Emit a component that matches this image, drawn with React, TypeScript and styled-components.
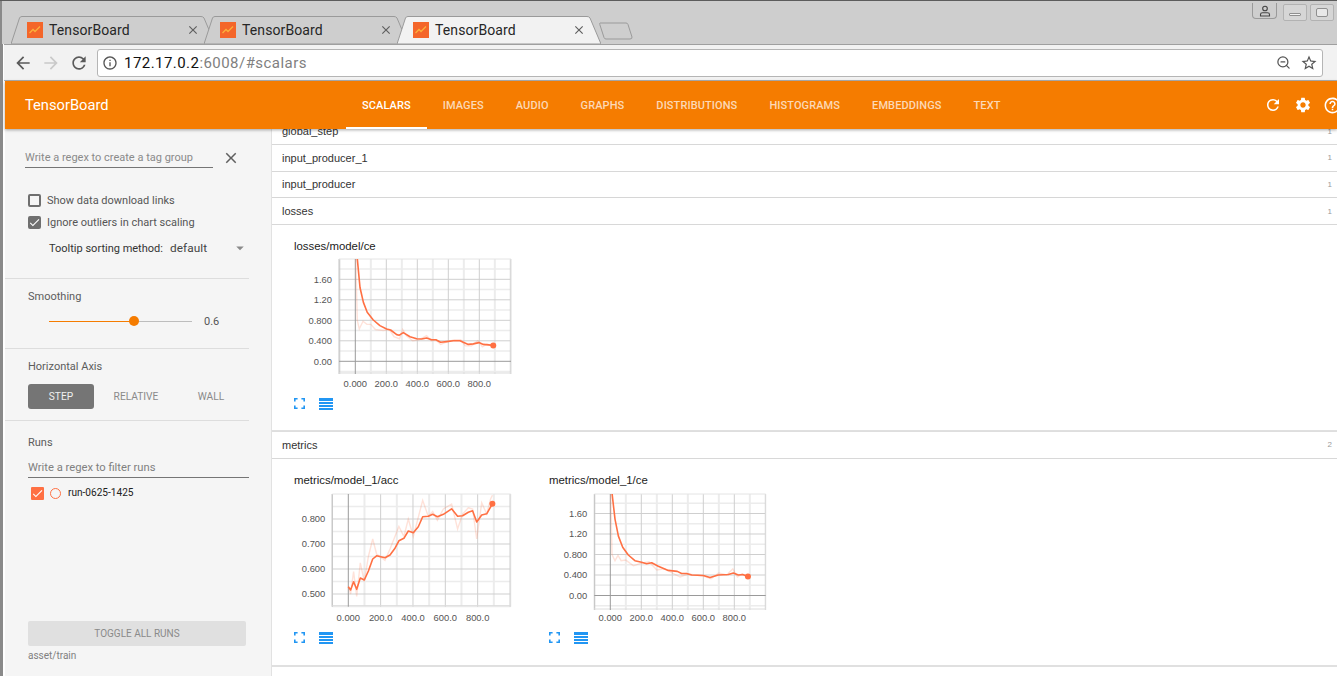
import React from "react";
import styled, { createGlobalStyle } from "styled-components";
import { MdArrowBack, MdArrowForward, MdRefresh, MdInfoOutline, MdStarBorder, MdSettings, MdHelpOutline, MdClose, MdCheck, MdArrowDropDown } from "react-icons/md";
import { ZoomOut } from "lucide-react";

const Global = createGlobalStyle`
  html, body { margin: 0; padding: 0; width: 1337px; height: 676px; overflow: hidden; background: #cecece; }
  #root { width: 1337px; height: 676px; overflow: hidden; }
  * { box-sizing: border-box; }
`;

const Page = styled.div`
  width: 1337px; height: 676px; display: flex; flex-direction: column; overflow: hidden;
  font-family: Roboto, "Liberation Sans", sans-serif; border-top: 1px solid #5c5c5c;
`;
const Strip = styled.div`
  height: 43px; flex: none; display: flex; align-items: flex-end; padding-left: 9px; background: #cecece;
  border-left: 2px solid #8a8a8a;
`;
const TabBox = styled.div<{ $active?: boolean }>`
  position: relative; width: 204px; height: 28px; margin-right: -11px;
  display: flex; align-items: center; padding: 0 15px 0 16px; z-index: ${p => (p.$active ? 2 : 1)};
  color: #262626; font-size: 14px; letter-spacing: 0.1px;
`;
const TabShape = styled.svg`
  position: absolute; left: 0; top: 0; width: 100%; height: 100%;
`;
const TabLabel = styled.span`
  position: relative; margin-left: 6px; flex: 1;
`;
const TabClose = styled.span`
  position: relative; display: flex; color: #5f5f5f;
`;
const Favicon = styled.svg`
  position: relative; width: 16px; height: 16px; flex: none;
`;
const NewTab = styled.svg`
  width: 34px; height: 18px; margin: 0 0 4px 9px; flex: none;
`;
const WinControls = styled.div`
  margin-left: auto; align-self: flex-start; display: flex; margin-top: 3px;
`;
const ProfileBtn = styled.div`
  width: 25px; height: 16px; border: 1px solid #9a9a9a; border-top: none; border-radius: 0 0 4px 4px;
  margin: -1px 6px 0 0; display: flex; align-items: center; justify-content: center; color: #444;
`;
const WinBtn = styled.div`
  width: 24px; height: 17px; margin-right: 3px; border: 1px solid #b2b2b2; border-radius: 2px; background: #d6d6d6;
  display: flex; align-items: center; justify-content: center;
`;
const Dash = styled.span`
  width: 12px; height: 3px; background: #f2f2f2; border: 1px solid #8f8f8f; border-radius: 1px; margin-top: 3px;
`;
const MaxBox = styled.span`
  width: 12px; height: 9px; background: #e8e8e8; border: 1px solid #8f8f8f; border-radius: 2px;
`;
const Frame = styled.div`
  flex: 1; min-height: 0; display: flex; flex-direction: column; border-left: 3px solid #8a8a8a; background: #fff;
`;
const Toolbar = styled.div`
  height: 37px; flex: none; display: flex; align-items: center; background: #f2f2f2; margin-left: 1px;
  border-top: 1px solid #9f9f9f; border-bottom: 1px solid #b0b0b0; padding: 0 14px 0 9px; gap: 8px;
`;
const NavIcon = styled.span<{ $off?: boolean }>`
  display: flex; color: ${p => (p.$off ? "#c9c9c9" : "#5a5a5a")};
`;
const Address = styled.div`
  flex: 1; height: 28px; background: #fff; border: 1px solid #b5b5b5; border-radius: 3px; display: flex; align-items: center;
  padding: 0 4px 0 4px; font-size: 15px; letter-spacing: 0.45px; color: #111;
`;
const InfoIcon = styled.span`
  display: flex; color: #555; margin-right: 6px;
`;
const UrlRest = styled.span`
  color: #808080; flex: 1;
`;
const AddrIcon = styled.span`
  display: flex; color: #555; margin-left: 9px;
`;
const Content = styled.div`
  flex: 1; min-height: 0; display: flex; flex-direction: column; border-left: 2px solid #fff;
`;
const Header = styled.header`
  height: 48px; flex: none; display: flex; align-items: center; background: #f57c00; padding-left: 20px; color: #fff;
  position: relative; z-index: 3; box-shadow: 0 1px 3px rgba(0, 0, 0, 0.35);
`;
const Brand = styled.div`
  width: 321px; font-size: 14.7px; font-weight: 400; flex: none;
`;
const Nav = styled.nav`
  display: flex; height: 100%;
`;
const NavTab = styled.div<{ $active?: boolean }>`
  display: flex; align-items: center; padding: 2px 16px 0; height: 100%; font-size: 11px; font-weight: 500; letter-spacing: 0.1px;
  color: ${p => (p.$active ? "#fff" : "rgba(255,255,255,0.72)")};
  border-bottom: 2px solid ${p => (p.$active ? "#fff" : "transparent")};
`;
const HeaderIcons = styled.div`
  margin-left: auto; display: flex; gap: 11.500px; margin-right: -5px; flex: none; align-items: center;
`;
const Body = styled.div`
  flex: 1; min-height: 0; display: flex;
`;
const Sidebar = styled.aside`
  width: 266px; flex: none; background: #f5f5f5; display: flex; flex-direction: column; color: #555;
`;
const Panel = styled.section<{ $h?: number; $grow?: boolean }>`
  width: 244px; ${p => (p.$h ? `height: ${p.$h}px; border-bottom: 1px solid #ddd;` : "")}
  ${p => (p.$grow ? "flex: 1; min-height: 0; padding-bottom: 15px;" : "")}
  display: flex; flex-direction: column; flex-shrink: 0;
`;
const RegexRow = styled.div`
  display: flex; align-items: center; margin: 19px 0 0 20px;
`;
const GroupInput = styled.div`
  width: 188px; height: 20px; border-bottom: 1px solid #757575; font-size: 11px; color: #8a8a8a; line-height: 19px; white-space: nowrap;
`;
const ClearIcon = styled.span`
  display: flex; color: #5f5f5f; margin-left: 9px;
`;
const CheckRow = styled.div<{ $top?: number }>`
  display: flex; align-items: center; height: 22px; margin: ${p => p.$top ?? 0}px 0 0 23px; font-size: 11px; color: #555;
`;
const Box = styled.span<{ $on?: boolean }>`
  width: 13px; height: 13px; border-radius: 2px; margin-right: 6px; flex: none; display: flex; align-items: center; justify-content: center;
  border: 2px solid #6f6f6f; background: ${p => (p.$on ? "#6f6f6f" : "transparent")}; color: #fff;
  svg { flex: none; }
`;
const SortRow = styled.div`
  display: flex; align-items: center; height: 22px; margin: 4px 0 0 44px; font-size: 11px; color: #333; white-space: nowrap;
`;
const SortValue = styled.span`
  margin-left: 7px; font-size: 11.800px; color: #444; letter-spacing: 0.1px; width: 61px; flex: none;
`;
const SortArrow = styled.span`
  display: flex; color: #8a8a8a; flex: none;
`;
const SideTitle = styled.div<{ $top: number }>`
  margin: ${p => p.$top}px 0 0 23px; height: 16px; line-height: 18px; font-size: 11px; color: #5c5c5c;
`;
const SliderRow = styled.div`
  display: flex; align-items: center; height: 20px; margin: 7px 0 0 44px;
`;
const Track = styled.div`
  position: relative; width: 143px; height: 1px; background: #bdbdbd;
`;
const Filled = styled.div`
  position: absolute; left: 0; top: 0; height: 1px; background: #f57c00;
`;
const Knob = styled.div`
  position: absolute; top: -4.500px; width: 10px; height: 10px; margin-left: -5px; border-radius: 50%; background: #f57c00;
`;
const SliderValue = styled.span`
  margin-left: 12px; font-size: 11px; color: #555;
`;
const AxisButtons = styled.div`
  display: grid; grid-template-columns: repeat(3, 66px); gap: 9px; margin: 10px 0 0 23px;
`;
const AxisButton = styled.div<{ $on?: boolean }>`
  height: 25px; display: flex; align-items: center; justify-content: center; border-radius: 3px; font-size: 10.200px;
  background: ${p => (p.$on ? "#757575" : "transparent")}; color: ${p => (p.$on ? "#f0f0f0" : "#8a8a8a")};
`;
const FilterInput = styled.div`
  width: 221px; height: 20px; margin: 8px 0 0 23px; border-bottom: 1px solid #757575; font-size: 11.200px; line-height: 20px; color: #808080;
`;
const RunRow = styled.div`
  display: flex; align-items: center; height: 16px; margin: 7px 0 0 26px; font-size: 10.100px; color: #222;
`;
const RunLabel = styled.span`
  margin-top: -2px;
`;
const RunBox = styled.span`
  width: 13px; height: 13px; border-radius: 1px; background: #ff7043; color: #fff; display: flex; align-items: center; justify-content: center; flex: none;
`;
const RunDot = styled.span`
  width: 11px; height: 11px; border-radius: 50%; border: 1.500px solid #ff7043; margin: 0 7px 0 6px; flex: none;
`;
const ToggleAll = styled.div`
  width: 218px; height: 25px; flex: none; margin: auto 0 0 23px; background: #e0e0e0; border-radius: 2px; color: #8a8a8a; font-size: 10px;
  display: flex; align-items: center; justify-content: center;
`;
const DataDir = styled.div`
  margin: 3px 0 0 23px; height: 12px; line-height: 14px; font-size: 10px; color: #808080;
`;
const Main = styled.main`
  flex: 1; min-width: 0; overflow: hidden; background: #fff; display: flex; flex-direction: column; border-left: 1px solid #e2e2e2;
`;
const Rows = styled.div`
  margin-top: -10.800px; display: flex; flex-direction: column;
`;
const CatRow = styled.div<{ $shadow?: boolean }>`
  height: 26.670px; flex: none; display: flex; align-items: center; justify-content: space-between; padding: 0 5px 0 10px;
  font-family: "Liberation Sans", Arial, sans-serif; font-size: 11px; color: #333; background: #fff;
  border-bottom: 1px solid #d8d8d8; ${p => (p.$shadow ? "box-shadow: 0 1px 2px rgba(0,0,0,.12);" : "")}
`;
const Count = styled.span`
  font-size: 8px; color: #9a9a9a;
`;
const Pane = styled.div<{ $h: number }>`
  height: ${p => p.$h}px; flex: none; display: flex; padding-left: 22px; background: #fff; border-bottom: 2px solid #e0e0e0;
`;
const Card = styled.div`
  width: 255px; flex: none; display: flex; flex-direction: column;
`;
const CardTitle = styled.div<{ $top: number }>`
  height: 14px; line-height: 14px; margin-top: ${p => p.$top}px; font-family: "Liberation Sans", Arial, sans-serif; font-size: 11.400px; color: #222;
`;
const Plot = styled.svg`
  display: block; width: 225px; height: 135px; margin-top: 1px;
`;
const CardActions = styled.div`
  display: flex; align-items: center; gap: 14px; height: 14px; margin-top: 8px;
`;
const ActionSvg = styled.svg`
  display: block; flex: none;
`;

type Pt = [number, number];
interface ChartDef {
  title: string;
  left: number; right: number; top: number; bottom: number;
  x0: number; xs: number; vRef: number; yRef: number; ys: number;
  yTicks: string[]; yVals: number[]; minorVals: number[];
  smooth: Pt[]; raw: Pt[];
}

const ceY = ["1.60", "1.20", "0.800", "0.400", "0.00"];
const charts: Record<string, ChartDef> = {
  loss: {
    title: "losses/model/ce", left: 45, right: 217, top: 5, bottom: 120, x0: 61.3, xs: 0.155, vRef: 0, yRef: 107.3, ys: 51.25,
    yTicks: ceY, yVals: [1.6, 1.2, 0.8, 0.4, 0], minorVals: [1.8, 1.4, 1, 0.6, 0.2, -0.2],
    smooth: [[13,2.0],[30,1.44],[52,1.15],[77,.956],[116,.806],[159,.696],[202,.63],[228,.61],[267,.52],[284,.51],[310,.56],[353,.48],[396,.44],[428,.436],[460,.455],[492,.42],[520,.42],[550,.37],[589,.384],[632,.4],[675,.4],[729,.33],[761,.34],[798,.364],[826,.33],[890,.31]],
    raw: [[3,2.0],[8,1.4],[13,.8],[26,.63],[50,.78],[75,.72],[100,.72],[130,.62],[180,.6],[220,.62],[250,.48],[285,.44],[305,.62],[330,.5],[370,.4],[410,.42],[460,.5],[490,.4],[520,.42],[550,.33],[590,.38],[640,.42],[680,.42],[710,.3],[750,.3],[790,.4],[820,.28],[850,.34],[890,.3]],
  },
  acc: {
    title: "metrics/model_1/acc", left: 38.3, right: 216.7, top: 6, bottom: 118.7, x0: 54.3, xs: 0.1617, vRef: 0.5, yRef: 106, ys: 250,
    yTicks: ["0.800", "0.700", "0.600", "0.500"], yVals: [0.8, 0.7, 0.6, 0.5], minorVals: [0.85, 0.75, 0.65, 0.55, 0.45],
    smooth: [[0,.529],[14,.516],[33,.549],[52,.519],[74,.564],[99,.556],[124,.592],[151,.64],[175,.653],[227,.645],[258,.656],[289,.683],[313,.713],[344,.723],[371,.752],[402,.745],[433,.769],[460,.809],[495,.811],[522,.819],[551,.809],[588,.819],[639,.841],[676,.811],[707,.813],[742,.827],[769,.833],[794,.788],[825,.816],[856,.821],[891,.861]],
    raw: [[0,.53],[14,.5],[33,.59],[52,.49],[74,.625],[99,.55],[124,.65],[151,.72],[175,.66],[227,.635],[258,.68],[313,.77],[344,.73],[371,.8],[402,.73],[460,.875],[495,.81],[522,.83],[551,.795],[588,.84],[639,.86],[676,.76],[707,.82],[742,.845],[769,.84],[794,.72],[825,.865],[856,.82],[880,.88],[891,.895]],
  },
  ce: {
    title: "metrics/model_1/ce", left: 45.3, right: 216.7, top: 6, bottom: 122, x0: 61.3, xs: 0.155, vRef: 0, yRef: 107.5, ys: 51.25,
    yTicks: ceY, yVals: [1.6, 1.2, 0.8, 0.4, 0], minorVals: [1.8, 1.4, 1, 0.6, 0.2, -0.2],
    smooth: [[11,2.0],[30,1.49],[52,1.16],[80,.94],[116,.79],[159,.68],[202,.65],[234,.62],[267,.64],[310,.57],[374,.49],[432,.47],[460,.43],[492,.43],[525,.4],[600,.39],[643,.35],[697,.4],[761,.41],[794,.44],[826,.4],[854,.41],[888,.37]],
    raw: [[3,2.0],[7,1.4],[11,.8],[30,.68],[50,.78],[70,.68],[100,.69],[150,.58],[200,.63],[250,.66],[300,.5],[350,.52],[400,.44],[450,.36],[500,.42],[550,.4],[600,.38],[650,.33],[700,.44],[750,.4],[790,.52],[820,.36],[850,.42],[888,.36]],
  },
};

function Chart({ def, id, titleTop }: { def: ChartDef; id: string; titleTop: number }) {
  const sx = (s: number) => def.x0 + s * def.xs;
  const sy = (v: number) => def.yRef - (v - def.vRef) * def.ys;
  const toPts = (pts: Pt[]) => pts.map(([s, v]) => `${sx(s).toFixed(1)},${sy(v).toFixed(1)}`).join(" ");
  const majors = [-100, 200, 400, 600, 800, 1000].map(sx).filter(x => x > def.left - 1 && x <= def.right);
  const minors = [100, 300, 500, 700, 900].map(sx).filter(x => x <= def.right);
  const labels = [0, 200, 400, 600, 800];
  const [ls, lv] = def.smooth[def.smooth.length - 1];
  return (
    <Card>
      <CardTitle $top={titleTop}>{def.title}</CardTitle>
      <Plot viewBox="0 0 225 135">
        <defs>
          <clipPath id={id}>
            <rect x={def.left} y={def.top} width={def.right - def.left} height={def.bottom - def.top} />
          </clipPath>
        </defs>
        {minors.map(x => <line key={x} x1={x} x2={x} y1={def.top} y2={def.bottom} stroke="#ececec" strokeWidth="2" />)}
        {def.minorVals.map(v => <line key={v} x1={def.left} x2={def.right} y1={sy(v)} y2={sy(v)} stroke="#ececec" strokeWidth="1.5" />)}
        {majors.map(x => <line key={x} x1={x} x2={x} y1={def.top} y2={def.bottom} stroke="#cfcfcf" strokeWidth="1" />)}
        {def.yVals.filter(v => v !== 0).map(v => <line key={v} x1={def.left} x2={def.right} y1={sy(v)} y2={sy(v)} stroke="#cfcfcf" strokeWidth="1" />)}
        <line x1={def.left} x2={def.left} y1={def.top} y2={def.bottom} stroke="#c4c4c4" />
        <line x1={def.right} x2={def.right} y1={def.top} y2={def.bottom} stroke="#dcdcdc" />
        <line x1={def.left} x2={def.right} y1={def.top} y2={def.top} stroke="#e4e4e4" />
        <line x1={def.left} x2={def.right} y1={def.bottom - 1} y2={def.bottom - 1} stroke="#dcdcdc" />
        <line x1={def.x0} x2={def.x0} y1={def.top} y2={def.bottom} stroke="#9a9a9a" />
        {def.yVals.includes(0) && <line x1={def.left} x2={def.right} y1={sy(0)} y2={sy(0)} stroke="#9a9a9a" />}
        <g clipPath={`url(#${id})`}>
          <polyline points={toPts(def.raw)} fill="none" stroke="#ff7043" strokeOpacity="0.2" strokeWidth="1.4" />
          <polyline points={toPts(def.smooth)} fill="none" stroke="#ff7043" strokeWidth="1.6" strokeLinejoin="round" />
        </g>
        <circle cx={sx(ls)} cy={sy(lv)} r="3" fill="#ff7043" />
        {def.yVals.map((v, i) => (
          <text key={v} x={def.left - 7} y={sy(v) + 3.3} textAnchor="end" fontFamily="'Liberation Sans', Arial, sans-serif" fontSize="9.4" fill="#555">{def.yTicks[i]}</text>
        ))}
        {labels.map(s => (
          <text key={s} x={sx(s)} y="132.5" textAnchor="middle" fontFamily="'Liberation Sans', Arial, sans-serif" fontSize="9.4" fill="#555">{s === 0 ? "0.000" : `${s}.0`}</text>
        ))}
      </Plot>
      <CardActions>
        <ActionSvg width="11" height="11" viewBox="0 0 11 11">
          <path d="M.8 3.6V.8h2.8M7.4.8h2.8v2.8M10.200 7.400v2.800H7.400M3.600 10.200H.8V7.400" fill="none" stroke="#2196f3" strokeWidth="1.6" />
        </ActionSvg>
        <ActionSvg width="14" height="12" viewBox="0 0 14 12">
          <path d="M0 0h14v3H0zM0 4h14v2H0zM0 7h14v2H0zM0 10h14v2H0z" fill="#2196f3" />
        </ActionSvg>
      </CardActions>
    </Card>
  );
}

function TabIcon() {
  return (
    <Favicon viewBox="0 0 16 16">
      <rect width="16" height="16" fill="#f4662a" />
      <path d="M2.500 11 6 7.500l2 2 5-5" fill="none" stroke="#fbb03b" strokeWidth="1.300" />
    </Favicon>
  );
}

function Tab({ active }: { active?: boolean }) {
  return (
    <TabBox $active={active}>
      <TabShape viewBox="0 0 204 28" preserveAspectRatio="none">
        <path d="M0 28 8.500 2Q9.200 .5 11 .5H190Q192 .5 193 2L204 28Z" fill={active ? "#f2f2f2" : "#cecece"} stroke="#9a9a9a" strokeWidth="1" />
      </TabShape>
      <TabIcon />
      <TabLabel>TensorBoard</TabLabel>
      <TabClose><MdClose size={14} /></TabClose>
    </TabBox>
  );
}

const navItems = ["SCALARS", "IMAGES", "AUDIO", "GRAPHS", "DISTRIBUTIONS", "HISTOGRAMS", "EMBEDDINGS", "TEXT"];
const smoothingFraction = 0.594;

export default function App() {
  return (
    <Page>
      <Global />
      <Strip>
        <Tab />
        <Tab />
        <Tab active />
        <NewTab viewBox="0 0 34 18">
          <path d="M1 1H27Q28.500 1 29 2.500L33 15Q33.300 17 31 17H7Q5.500 17 5 15.500L.8 2.500Q.5 1 1 1Z" fill="#cecece" stroke="#9a9a9a" />
        </NewTab>
        <WinControls>
          <ProfileBtn>
            <svg width="12" height="12" viewBox="0 0 12 12">
              <circle cx="6" cy="3.500" r="2.300" fill="none" stroke="#444" strokeWidth="1.100" />
              <path d="M1.500 11V9.500Q1.500 7.800 3.500 7.800H8.500Q10.500 7.800 10.500 9.500V11Z" fill="none" stroke="#444" strokeWidth="1.100" />
            </svg>
          </ProfileBtn>
          <WinBtn><Dash /></WinBtn>
          <WinBtn><MaxBox /></WinBtn>
        </WinControls>
      </Strip>
      <Frame>
        <Toolbar>
          <NavIcon><MdArrowBack size={20} /></NavIcon>
          <NavIcon $off><MdArrowForward size={20} /></NavIcon>
          <NavIcon><MdRefresh size={20} /></NavIcon>
          <Address>
            <InfoIcon><MdInfoOutline size={16} /></InfoIcon>
            <span>172.17.0.2</span>
            <UrlRest>:6008/#scalars</UrlRest>
            <AddrIcon><ZoomOut size={15} /></AddrIcon>
            <AddrIcon><MdStarBorder size={18} /></AddrIcon>
          </Address>
        </Toolbar>
        <Content>
          <Header>
            <Brand>TensorBoard</Brand>
            <Nav>
              {navItems.map((n, i) => <NavTab key={n} $active={i === 0}>{n}</NavTab>)}
            </Nav>
            <HeaderIcons>
              <MdRefresh size={18} />
              <MdSettings size={18} />
              <MdHelpOutline size={19} />
            </HeaderIcons>
          </Header>
          <Body>
            <Sidebar>
              <Panel $h={150}>
                <RegexRow>
                  <GroupInput>Write a regex to create a tag group</GroupInput>
                  <ClearIcon><MdClose size={18} /></ClearIcon>
                </RegexRow>
                <CheckRow $top={21}><Box /><span>Show data download links</span></CheckRow>
                <CheckRow><Box $on><MdCheck size={13} /></Box><span>Ignore outliers in chart scaling</span></CheckRow>
                <SortRow>
                  <span>Tooltip sorting method:</span>
                  <SortValue>default</SortValue>
                  <SortArrow><MdArrowDropDown size={18} /></SortArrow>
                </SortRow>
              </Panel>
              <Panel $h={70}>
                <SideTitle $top={9}>Smoothing</SideTitle>
                <SliderRow>
                  <Track>
                    <Filled style={{ width: `${smoothingFraction * 100}%` }} />
                    <Knob style={{ left: `${smoothingFraction * 100}%` }} />
                  </Track>
                  <SliderValue>0.6</SliderValue>
                </SliderRow>
              </Panel>
              <Panel $h={72}>
                <SideTitle $top={9}>Horizontal Axis</SideTitle>
                <AxisButtons>
                  <AxisButton $on>STEP</AxisButton>
                  <AxisButton>RELATIVE</AxisButton>
                  <AxisButton>WALL</AxisButton>
                </AxisButtons>
              </Panel>
              <Panel $grow>
                <SideTitle $top={13}>Runs</SideTitle>
                <FilterInput>Write a regex to filter runs</FilterInput>
                <RunRow>
                  <RunBox><MdCheck size={13} /></RunBox>
                  <RunDot />
                  <RunLabel>run-0625-1425</RunLabel>
                </RunRow>
                <ToggleAll>TOGGLE ALL RUNS</ToggleAll>
                <DataDir>asset/train</DataDir>
              </Panel>
            </Sidebar>
            <Main>
              <Rows>
                <CatRow><span>global_step</span><Count>1</Count></CatRow>
                <CatRow><span>input_producer_1</span><Count>1</Count></CatRow>
                <CatRow><span>input_producer</span><Count>1</Count></CatRow>
                <CatRow $shadow><span>losses</span><Count>1</Count></CatRow>
                <Pane $h={207.3}>
                  <Chart def={charts.loss} id="clip-loss" titleTop={14} />
                </Pane>
                <CatRow $shadow><span>metrics</span><Count>2</Count></CatRow>
                <Pane $h={208}>
                  <Chart def={charts.acc} id="clip-acc" titleTop={14} />
                  <Chart def={charts.ce} id="clip-ce" titleTop={14} />
                </Pane>
                <CatRow><span>model</span><Count>352</Count></CatRow>
              </Rows>
            </Main>
          </Body>
        </Content>
      </Frame>
    </Page>
  );
}
